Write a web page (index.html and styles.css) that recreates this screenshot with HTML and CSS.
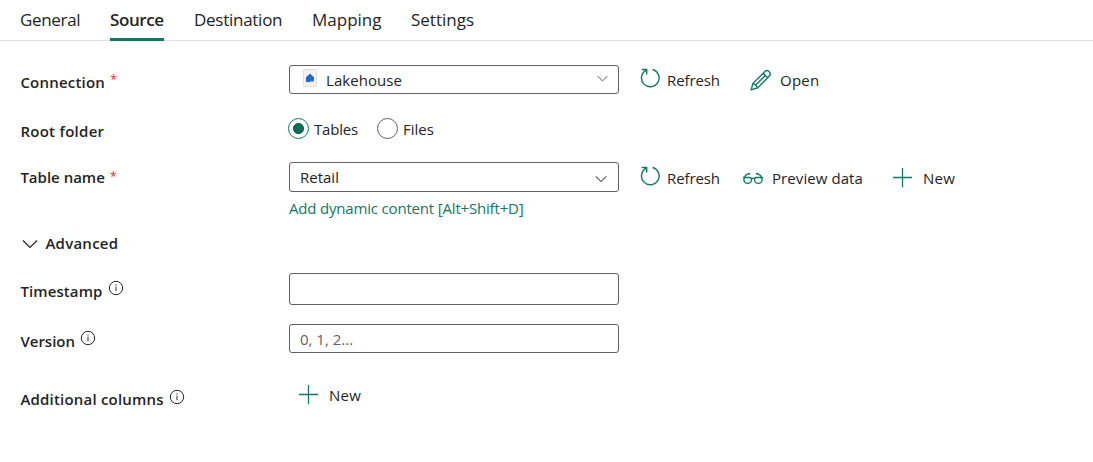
FILE: index.html
```html
<!DOCTYPE html>
<html lang="en">
<head>
<meta charset="utf-8">
<title>Copy data – Source</title>
<link rel="stylesheet" href="styles.css">
</head>
<body>
<svg class="defs" aria-hidden="true">
  <symbol id="refresh" viewBox="0 0 20 20"><path d="M12.6 1.5A8.8 8.8 0 1 1 6 2.3M1.7 1.5h5v5"/></symbol>
  <symbol id="plus" viewBox="0 0 20 20"><path d="M10.5 1v19M1 10.5h19"/></symbol>
  <symbol id="chevron" viewBox="0 0 16 10"><path d="M1 1.5l7 7 7-7"/></symbol>
  <symbol id="info" viewBox="0 0 16 16"><circle cx="8" cy="8" r="6.7"/><path d="M8 6.6v4.6M8 4.4v1.2"/></symbol>
</svg>
<nav class="tabs">
  <a class="tab general">General</a>
  <a class="tab source active">Source</a>
  <a class="tab destination">Destination</a>
  <a class="tab mapping">Mapping</a>
  <a class="tab settings">Settings</a>
</nav>
<main class="form">
  <div class="row connection">
    <label class="label"><span>Connection</span><span class="required">*</span></label>
    <div class="field">
      <svg class="lakehouse" viewBox="0 0 14 18"><rect class="page" x=".5" y=".5" width="13" height="17" rx="1"/><path class="house" d="M3 8.2L7 4.7l4 3.5V13H3z"/><path class="shade" d="M7.5 11.8H11V13H7.5z"/></svg>
      <span class="t-lakehouse">Lakehouse</span>
      <svg class="caret small"><use href="#chevron"/></svg>
    </div>
    <div class="actions">
      <button class="action refresh"><svg class="icon"><use href="#refresh"/></svg><span>Refresh</span></button>
      <button class="action open"><svg class="icon pencil" viewBox="0 0 22 22"><path d="M1.2 20.8l1.6-6.2L14.9 2.5q2-1.9 4.2.2t.2 4.4L7.2 19.2zM2.8 14.6q3.7.7 4.4 4.6M13.1 4.3l4.5 4.5M15.3 6.5L5.1 16.7"/></svg><span>Open</span></button>
    </div>
  </div>
  <div class="row root">
    <label class="label"><span>Root folder</span></label>
    <div class="radios">
      <span class="radio checked"></span><span class="t-tables">Tables</span>
      <span class="radio"></span><span>Files</span>
    </div>
  </div>
  <div class="row table">
    <label class="label"><span>Table name</span><span class="required">*</span></label>
    <div class="field"><span>Retail</span><svg class="caret"><use href="#chevron"/></svg></div>
    <div class="actions">
      <button class="action refresh"><svg class="icon"><use href="#refresh"/></svg><span>Refresh</span></button>
      <button class="action preview"><svg class="icon glasses" viewBox="0 0 22 14"><path d="M9.5 7.8a3.8 3.6 0 1 1-7.6 0q0-1.8 1.3-2.3h5q1.3.5 1.3 2.3zM20.1 7.8a3.8 3.6 0 1 1-7.6 0q0-1.8 1.3-2.3h5q1.3.5 1.3 2.3zM9.5 6.6q1.5-.8 3 0M1 5.5h3M18 5.5h3M2.6 5.3q.8-3.2 5.6-3.8M19.4 5.3q-.8-3.2-5.6-3.8"/></svg><span>Preview data</span></button>
      <button class="action new"><svg class="icon"><use href="#plus"/></svg><span>New</span></button>
    </div>
  </div>
  <a class="dynamic"><span>Add dynamic content [Alt+Shift+D]</span></a>
  <div class="advanced"><svg class="expander"><use href="#chevron"/></svg><span>Advanced</span></div>
  <div class="row timestamp">
    <label class="label"><span>Timestamp</span><svg class="info"><use href="#info"/></svg></label>
    <div class="field"></div>
  </div>
  <div class="row version">
    <label class="label"><span>Version</span><svg class="info"><use href="#info"/></svg></label>
    <div class="field placeholder"><span>0, 1, 2...</span></div>
  </div>
  <div class="row additional">
    <label class="label"><span>Additional columns</span><svg class="info"><use href="#info"/></svg></label>
    <button class="action add"><svg class="icon"><use href="#plus"/></svg><span>New</span></button>
  </div>
</main>
</body>
</html>
```
FILE: styles.css
```css
* { box-sizing: border-box; }
body { margin: 0; background: #fff; color: #242424; font: 15px/20px "Open Sans", "Noto Sans", sans-serif; white-space: nowrap; overflow: hidden; }
.defs { display: none; }
svg { flex: none; fill: none; stroke: currentColor; }
span { flex: none; }

.tabs { display: flex; gap: 30px; height: 41px; padding: 7px 0 0 20px; border-bottom: 1px solid #e0e0e0; font-size: 17px; line-height: 26px; }
.tab { height: 34px; }
.tab.active { font-weight: 600; border-bottom: 3px solid #117865; }
.general { width: 60px; letter-spacing: -.33px; }
.source { width: 54px; letter-spacing: -.4px; }
.destination { width: 88px; letter-spacing: -.27px; }
.mapping { width: 69px; }

.form { padding-left: 20px; }
.row { display: grid; grid-template-columns: 269px 330px 1fr; align-items: start; }
.label { display: flex; padding-left: .4px; font-weight: 600; letter-spacing: .2px; }
.required { height: 20px; margin: -1px 0 0 5px; color: #d13438; font-size: 13px; font-weight: 400; }
.field { display: flex; align-items: center; height: 100%; padding: 0 10px; border: 1px solid #616161; border-radius: 3px; }
.caret { width: 12px; height: 8px; margin-left: auto; color: #555; stroke-width: 1.4; }
.caret.small { width: 11px; height: 7px; margin: -2px 0 0 auto; }
.actions { display: flex; }
.action { display: flex; align-items: center; padding: 0; border: 0; background: none; color: inherit; font: inherit; }
.icon { width: 20px; height: 20px; color: #117865; stroke-width: 1.4; }
.refresh { width: 103px; margin-left: 21px; letter-spacing: -.1px; }
.refresh .icon { margin: -4px 7px 0 0; }
.open { letter-spacing: .25px; }
.open .icon { width: 22px; height: 22px; margin: 0 8px 0 7px; }
.preview { width: 149px; letter-spacing: .08px; }
.preview .icon { width: 22px; height: 14px; margin: 2px 8px 0 -1px; }
.new, .add { letter-spacing: .25px; }
.new .icon, .add .icon { margin: -3px 11px 0 0; stroke-width: 1.3; }

.connection { height: 29px; margin-top: 24px; }
.connection .label { margin-top: 7px; }
.connection .required { margin-top: -3px; }
.connection .actions { margin-top: 4px; }
.lakehouse { width: 14px; height: 18px; margin: -3px 9px 0 3px; stroke: none; }
.t-lakehouse { letter-spacing: .05px; }
.page { fill: #f3f2f1; stroke: #dedede; }
.house { fill: #2864cb; }
.shade { fill: #8bb3ea; }

.root { height: 21px; margin-top: 24px; }
.root .label { margin-top: 3px; letter-spacing: .27px; }
.radios { display: flex; align-items: center; height: 21px; margin-left: -1px; }
.radio { width: 21px; height: 21px; margin-right: 5px; border: 1px solid #616161; border-radius: 50%; }
.radio.checked { border-color: #117865; background: radial-gradient(circle, #0e6b59 5.2px, transparent 5.8px); }
.t-tables { width: 63px; letter-spacing: -.2px; }

.table { height: 30px; margin-top: 23px; }
.table .label { margin-top: 5px; letter-spacing: 0; }
.table .actions { margin-top: 6px; }
.table .caret { margin-top: 3px; margin-right: 1px; }

.dynamic { display: block; height: 20px; margin: 6px 0 0 269px; color: #117865; letter-spacing: -.18px; }
.advanced { display: flex; align-items: center; height: 20px; margin-top: 15px; font-weight: 600; letter-spacing: .25px; }
.expander { width: 16px; height: 10px; margin: 1px 7.4px 0 2px; stroke-width: 1.2; }

.info { width: 16px; height: 16px; margin: -1px 0 0 5px; stroke-width: 1; }
.timestamp { height: 32px; margin-top: 20px; }
.timestamp .label { margin-top: 8px; letter-spacing: .1px; }
.version { height: 29px; margin-top: 19px; }
.version .label { margin-top: 7px; letter-spacing: 0; }
.placeholder { color: #616161; }
.additional { height: 20px; margin-top: 32px; }
.additional .label { margin-top: 4px; }
.additional .info { margin-top: 0; }
.add { margin-left: 9px; }
```
